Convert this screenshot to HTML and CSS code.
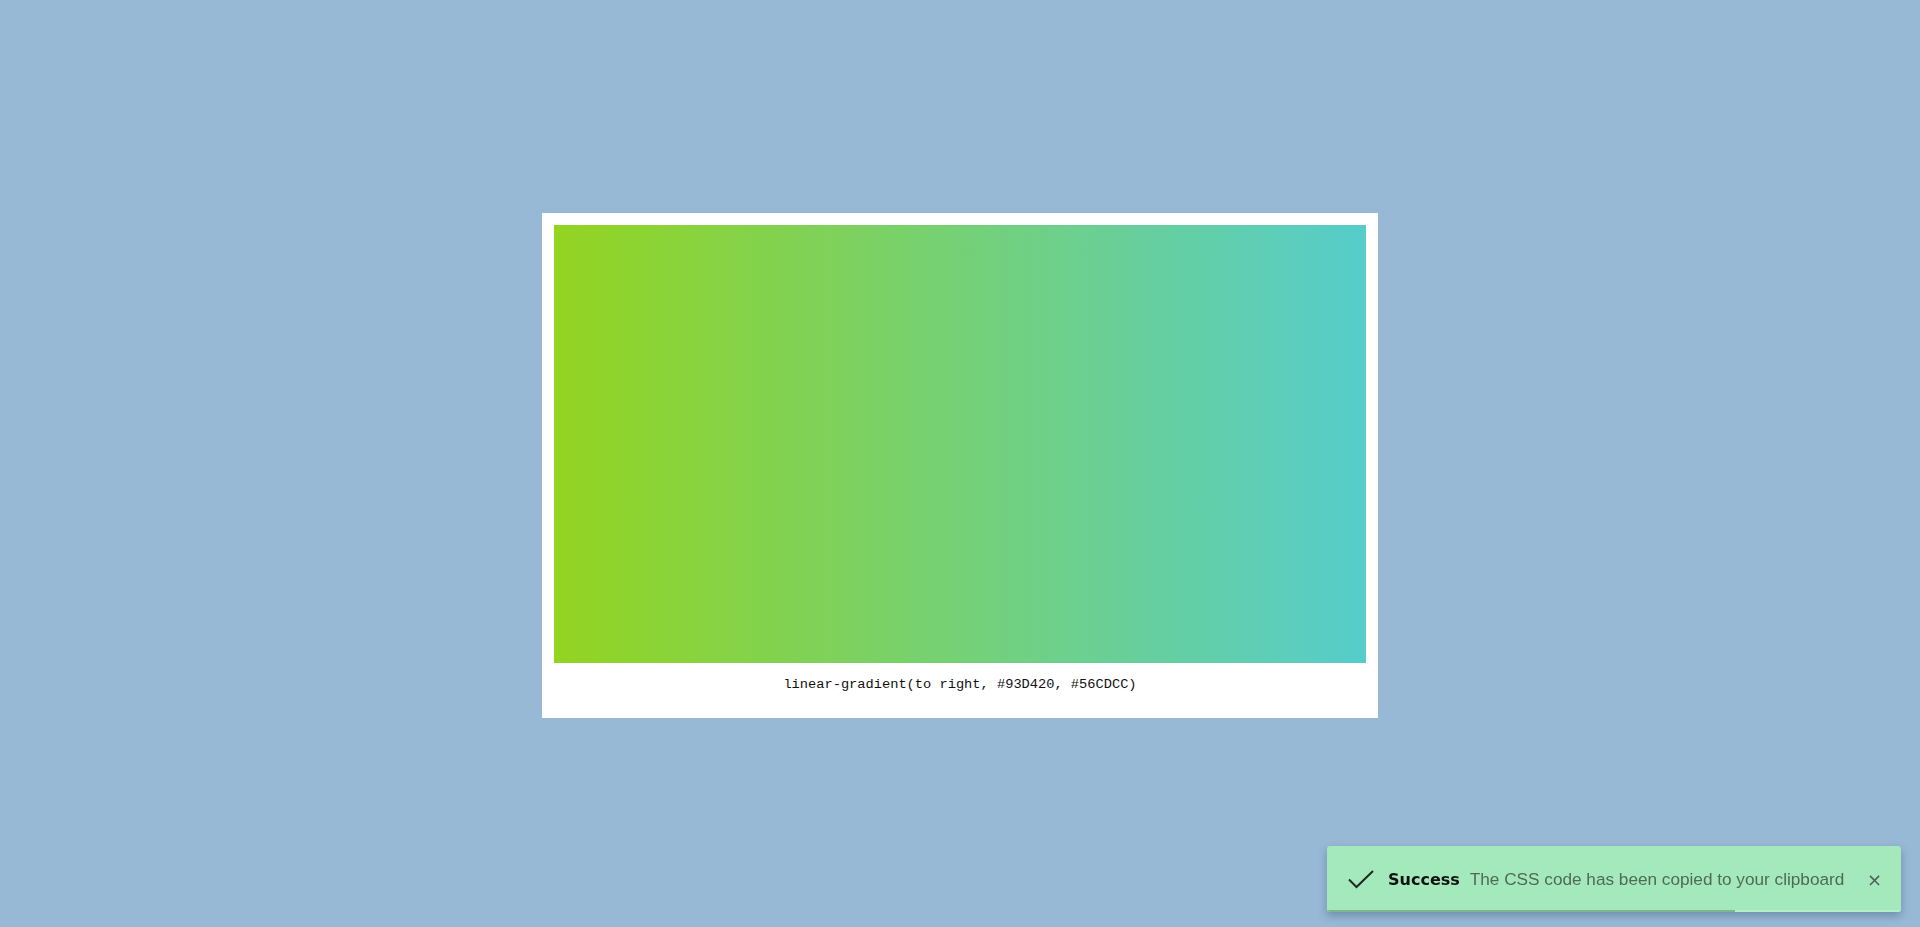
FILE: index.html
```html
<!DOCTYPE html>
<html lang="en">
<head>
<meta charset="utf-8">
<title>Gradient</title>
<link rel="stylesheet" href="styles.css">
</head>
<body>
<main class="stage">
  <div class="card">
    <div class="swatch"></div>
    <p class="code">linear-gradient(to right, #93D420, #56CDCC)</p>
  </div>
</main>
<div class="toast">
  <svg class="check" width="26" height="19" viewBox="0 0 26 19"><polyline points="1,9.5 8.5,17 25,1" fill="none" stroke="#1f2a22" stroke-width="2"/></svg>
  <span class="title">Success</span>
  <span class="msg">The CSS code has been copied to your clipboard</span>
  <span class="close">×</span>
  <div class="progress"><div class="bar"></div></div>
</div>
</body>
</html>
```

FILE: styles.css
```css
html, body {
  margin: 0;
  height: 100%;
}
body {
  background: #97b9d6;
  font-family: "DejaVu Sans", sans-serif;
  overflow: hidden;
}
.stage {
  height: 100%;
  display: flex;
  align-items: center;
  justify-content: center;
}
.card {
  background: #fff;
  padding: 12px 12px 0;
  width: 812px;
  margin-top: 4px;
}
.swatch {
  height: 438px;
  background: linear-gradient(to right, #93D420, #56CDCC);
}
.code {
  margin: 0;
  height: 55px;
  padding-top: 14px;
  box-sizing: border-box;
  text-align: center;
  font-family: "Liberation Mono", monospace;
  font-size: 13.7px;
  line-height: 16px;
  color: #111;
}
.toast {
  position: fixed;
  right: 19px;
  bottom: 15px;
  width: 574px;
  height: 66px;
  box-sizing: border-box;
  background: #a3e9bb;
  border-radius: 3px;
  box-shadow: 0 4px 8px rgba(40, 60, 80, 0.35);
  display: flex;
  align-items: center;
  padding: 0 19px 0 21px;
  overflow: hidden;
}
.check {
  flex: none;
  margin-right: 14px;
  margin-top: 1px;
}
.title {
  font-weight: bold;
  font-size: 16px;
  color: #111;
  margin-right: 10px;
}
.msg {
  font-family: "Liberation Sans", sans-serif;
  font-size: 17.2px;
  color: #4f6b57;
  flex: 1;
  white-space: nowrap;
}
.close {
  font-size: 18px;
  color: #4f5f55;
  font-family: "DejaVu Sans", sans-serif;
}
.progress {
  position: absolute;
  left: 0;
  right: 0;
  bottom: 0;
  height: 2px;
  background: #b4efc8;
}
.bar {
  width: 71%;
  height: 100%;
  background: #7fb58f;
}
```
